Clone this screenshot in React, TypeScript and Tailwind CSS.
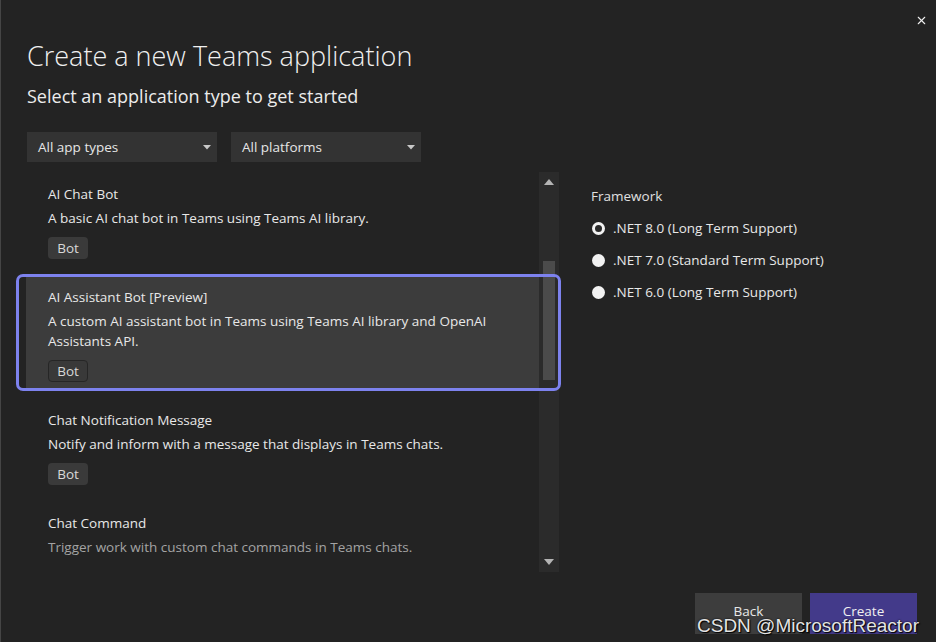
import { X } from "lucide-react";

const font = { fontFamily: '"Open Sans", "Noto Sans", sans-serif' };

interface Template {
  title: string;
  desc: string[];
  badge?: boolean;
  selected?: boolean;
  dim?: boolean;
}

const templates: Template[] = [
  { title: "AI Chat Bot", desc: ["A basic AI chat bot in Teams using Teams AI library."], badge: true },
  {
    title: "AI Assistant Bot [Preview]",
    desc: ["A custom AI assistant bot in Teams using Teams AI library and OpenAI", "Assistants API."],
    badge: true,
    selected: true,
  },
  { title: "Chat Notification Message", desc: ["Notify and inform with a message that displays in Teams chats."], badge: true },
  { title: "Chat Command", desc: ["Trigger work with custom chat commands in Teams chats."], dim: true },
];

const frameworks = [
  ".NET 8.0 (Long Term Support)",
  ".NET 7.0 (Standard Term Support)",
  ".NET 6.0 (Long Term Support)",
];

function Caret() {
  return (
    <svg width="8" height="5" viewBox="0 0 8 5" className="shrink-0">
      <path d="M0 0h8L4 4.5z" fill="#c8c8c8" />
    </svg>
  );
}

function Dropdown({ label }: { label: string }) {
  return (
    <div className="w-[190px] h-[30px] bg-[#333333] flex items-center justify-between pl-[11px] pr-[6px] text-[13.5px] text-[#e6e6e6]">
      <span>{label}</span>
      <Caret />
    </div>
  );
}

function Badge({ selected }: { selected?: boolean }) {
  return (
    <span
      className={`inline-flex items-center justify-center w-[40px] h-[22px] rounded-[4px] text-[13.5px] text-[#d8d8d8] ${
        selected ? "bg-[#393939] border border-[#262626]" : "bg-[#3a3a3a]"
      }`}
    >
      Bot
    </span>
  );
}

function TemplateItem({ t }: { t: Template }) {
  return (
    <div className={`relative pl-[22px] pt-[10px] pb-[8px] ${t.selected ? "bg-[#3c3c3c]" : ""}`}>
      <div className="h-[20px] leading-[20px] text-[13.5px] text-[#e8e8e8]">{t.title}</div>
      <div className={`mt-[4px] text-[13.5px] leading-[20px] ${t.dim ? "text-[#a3a3a3]" : "text-[#e8e8e8]"}`}>
        {t.desc.map((d) => (
          <div key={d}>{d}</div>
        ))}
      </div>
      {t.badge && (
        <div className="mt-[7px] h-[22px]">
          <Badge selected={t.selected} />
        </div>
      )}
      {t.selected && (
        <div className="absolute -left-[10px] -top-[3px] -right-[22px] -bottom-[3px] border-[3px] border-[#7d82ee] rounded-[7px] pointer-events-none" />
      )}
    </div>
  );
}

function Scrollbar() {
  return (
    <div className="w-[20px] h-[400px] bg-[#2b2b2b] flex flex-col items-center">
      <svg width="10" height="6" viewBox="0 0 10 6" className="mt-[7px]">
        <path d="M0 6h10L5 0z" fill="#b4b4b4" />
      </svg>
      <div className="mt-[76px] w-[12px] h-[119px] bg-[#4b4b4b]" />
      <div className="flex-1" />
      <svg width="10" height="6" viewBox="0 0 10 6" className="mb-[7px]">
        <path d="M0 0h10L5 6z" fill="#b4b4b4" />
      </svg>
    </div>
  );
}

function Radio({ checked }: { checked?: boolean }) {
  return checked ? (
    <span className="w-[13px] h-[13px] rounded-full bg-[#f2f2f2] flex items-center justify-center">
      <span className="w-[7px] h-[7px] rounded-full bg-[#2a2a2a]" />
    </span>
  ) : (
    <span className="w-[13px] h-[13px] rounded-full bg-[#f2f2f2]" />
  );
}

export default function App() {
  return (
    <div
      className="w-[936px] h-[642px] bg-[#232323] border-l border-[#454545] text-[#e8e8e8] flex flex-col overflow-hidden relative"
      style={font}
    >
      <div className="flex justify-end pr-[8px] pt-[14px] h-[40px]">
        <X size={13} strokeWidth={2} color="#f0f0f0" />
      </div>

      <div className="pl-[26px]">
        <h1 className="text-[27px] leading-[34px] font-light text-[#f0f0f0] -mt-[1px]">Create a new Teams application</h1>
        <p className="mt-[10px] text-[18px] leading-[26px] text-[#ececec]">Select an application type to get started</p>
        <div className="mt-[23px] flex gap-[14px]">
          <Dropdown label="All app types" />
          <Dropdown label="All platforms" />
        </div>
      </div>

      <div className="mt-[10px] flex">
        <div className="pl-[25px] flex">
          <div className="w-[513px] pt-[2px] flex flex-col gap-[12px]">
            {templates.map((t) => (
              <TemplateItem key={t.title} t={t} />
            ))}
          </div>
          <Scrollbar />
        </div>

        <div className="ml-[32px] pt-[14px]">
          <div className="text-[13.5px] leading-[20px] text-[#e0e0e0]">Framework</div>
          <div className="mt-[12px] pl-[1px] flex flex-col gap-[12px]">
            {frameworks.map((f, i) => (
              <label key={f} className="flex items-center gap-[8px] h-[20px] text-[13.5px] text-[#e8e8e8]">
                <Radio checked={i === 0} />
                <span>{f}</span>
              </label>
            ))}
          </div>
        </div>
      </div>

      <div className="flex-1" />
      <div className="flex justify-end gap-[8px] pr-[19px] pb-[8px]">
        <button className="w-[107px] h-[41px] bg-[#3d3d3d] text-[13.5px] text-[#e8e8e8] pb-[4px]">Back</button>
        <button className="w-[107px] h-[41px] bg-[#433a8a] text-[13.5px] text-[#f0f0f0] pb-[4px]">Create</button>
      </div>

      <div
        className="absolute right-[17px] bottom-[5px] text-[19px] leading-[22px] text-[#e4e4e4] [text-shadow:0_0_2px_#000,1px_1px_1px_#000]"
        style={{ fontFamily: '"Liberation Sans", Arial, sans-serif' }}
      >
        CSDN @MicrosoftReactor
      </div>
    </div>
  );
}
